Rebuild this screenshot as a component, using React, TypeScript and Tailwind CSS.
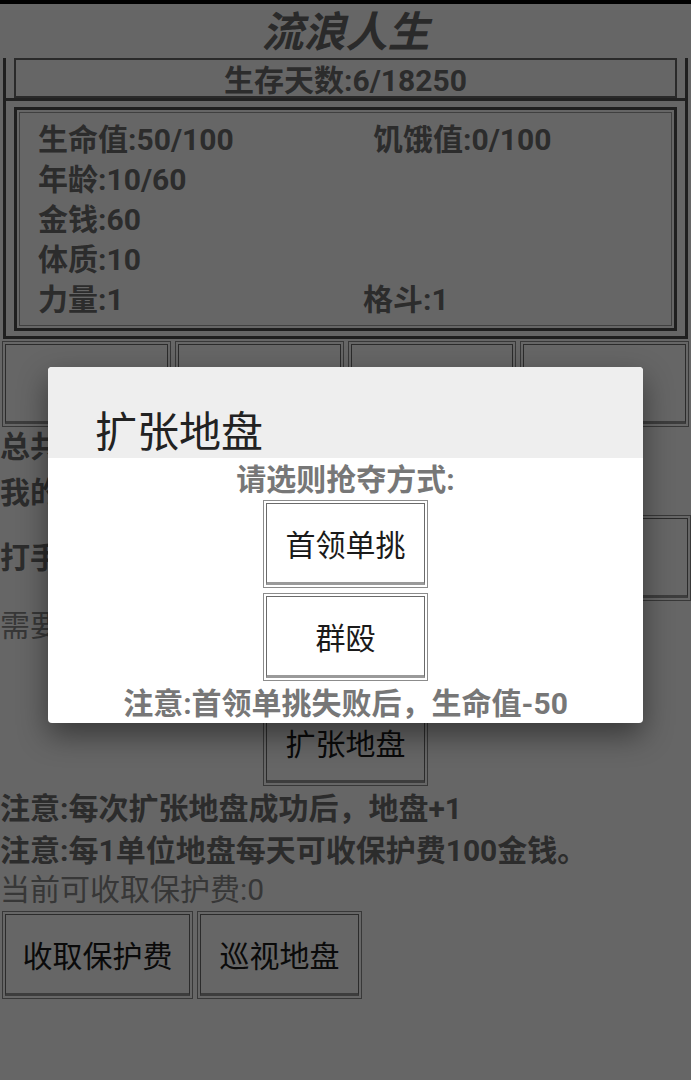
import React from "react";

const FONT = "font-[family-name:Roboto,'Noto_Sans_CJK_SC',sans-serif]";

// old-style framed button: thin outer line, light gap, darker inner line
function FrameButton({
  label,
  className = "",
}: {
  label?: string;
  className?: string;
}) {
  return (
    <div className={`border border-[#8c8c8c] bg-white p-[2px] ${className}`}>
      <div className="flex h-full items-center justify-center border border-[#6b6b6b] border-b-[3px] border-b-[#9a9a9a] pt-[4px] text-[30px] text-[#1a1a1a]">
        {label}
      </div>
    </div>
  );
}

function Stat({ text, className = "" }: { text: string; className?: string }) {
  return <span className={`font-bold text-[#6e6e6e] ${className}`}>{text}</span>;
}

export default function App() {
  return (
    <div className={`relative h-[1080px] overflow-hidden bg-white ${FONT}`}>
      {/* 顶部状态栏残留 */}
      <div className="h-[4px] bg-black" />

      <div className="flex h-[54px] items-center justify-center pt-[4px] text-[42px] font-bold italic leading-none text-[#6a6a6a]">
        流浪人生
      </div>

      {/* 角色信息框 */}
      <div className="mx-[3px] border-x-[3px] border-b-[3px] border-[#4f4f4f]">
        <div className="mx-[8px] flex h-[40px] items-center justify-center border-2 border-[#6a6a6a] pt-[4px] text-[30px] font-bold text-[#6e6e6e]">
          生存天数:6/18250
        </div>
        <div className="h-[3px] bg-[#555]" />
        <div className="mx-[8px] mt-[6px] mb-[5px] border-[3px] border-[#4f4f4f] p-[2px]">
          <div className="border border-[#a0a0a0] pl-[18px] pt-[7px] pb-[5px] text-[30px] leading-[40px]">
            <div className="flex">
              <Stat text="生命值:50/100" className="w-[335px]" />
              <Stat text="饥饿值:0/100" />
            </div>
            <div><Stat text="年龄:10/60" /></div>
            <div><Stat text="金钱:60" /></div>
            <div><Stat text="体质:10" /></div>
            <div className="flex">
              <Stat text="力量:1" className="w-[325px]" />
              <Stat text="格斗:1" />
            </div>
          </div>
        </div>
      </div>

      {/* 功能按钮 */}
      <div className="mt-[2px] grid h-[86px] grid-cols-4 gap-[4px] px-[2px]">
        <FrameButton label="" />
        <FrameButton label="" />
        <FrameButton label="" />
        <FrameButton label="" />
      </div>

      <div className="text-[30px] leading-[40px]">
        <div className="font-bold text-[#6e6e6e]">总共</div>
        <div className="mt-[6px] font-bold text-[#6e6e6e]">我的</div>
        <div className="mt-[2px] flex h-[86px] items-center">
          <span className="flex-1 font-bold text-[#6e6e6e]">打手</span>
          <FrameButton label="" className="h-[86px] w-[190px]" />
        </div>
        <div className="mt-[5px] text-[#8a8a8a]">需要</div>
      </div>

      <div className="mt-[54px] flex justify-center">
        <FrameButton label="扩张地盘" className="h-[86px] w-[165px]" />
      </div>

      <div className="mt-[3px] text-[30px] leading-[40px]">
        <div className="font-bold text-[#6e6e6e]">注意:每次扩张地盘成功后，地盘+1</div>
        <div className="mt-[2px] font-bold text-[#6e6e6e]">注意:每1单位地盘每天可收保护费100金钱。</div>
        <div className="leading-[38px] text-[#8a8a8a]">当前可收取保护费:0</div>
      </div>

      <div className="mt-[2px] flex gap-[4px] px-[2px]">
        <FrameButton label="收取保护费" className="h-[88px] w-[191px]" />
        <FrameButton label="巡视地盘" className="h-[88px] w-[165px]" />
      </div>

      {/* 对话框遮罩 */}
      <div className="absolute inset-0 bg-black/60">
        <div className="mx-auto mt-[367px] w-[595px] overflow-hidden rounded-[4px] bg-white shadow-[0_12px_30px_rgba(0,0,0,0.45)]">
          <div className="bg-[#eeeeee] pl-[47px] pt-[46px] pb-[5px] text-[42px] leading-[40px] text-[#222]">
            扩张地盘
          </div>
          <div className="flex flex-col items-center pt-[2px]">
            <div className="text-[30px] font-bold leading-[40px] text-[#777]">请选则抢夺方式:</div>
            <FrameButton label="首领单挑" className="h-[88px] w-[165px]" />
            <FrameButton label="群殴" className="mt-[5px] h-[88px] w-[165px]" />
            <div className="pt-[3px] text-[30px] font-bold leading-[39px] text-[#777]">
              注意:首领单挑失败后，生命值-50
            </div>
          </div>
        </div>
      </div>
    </div>
  );
}
